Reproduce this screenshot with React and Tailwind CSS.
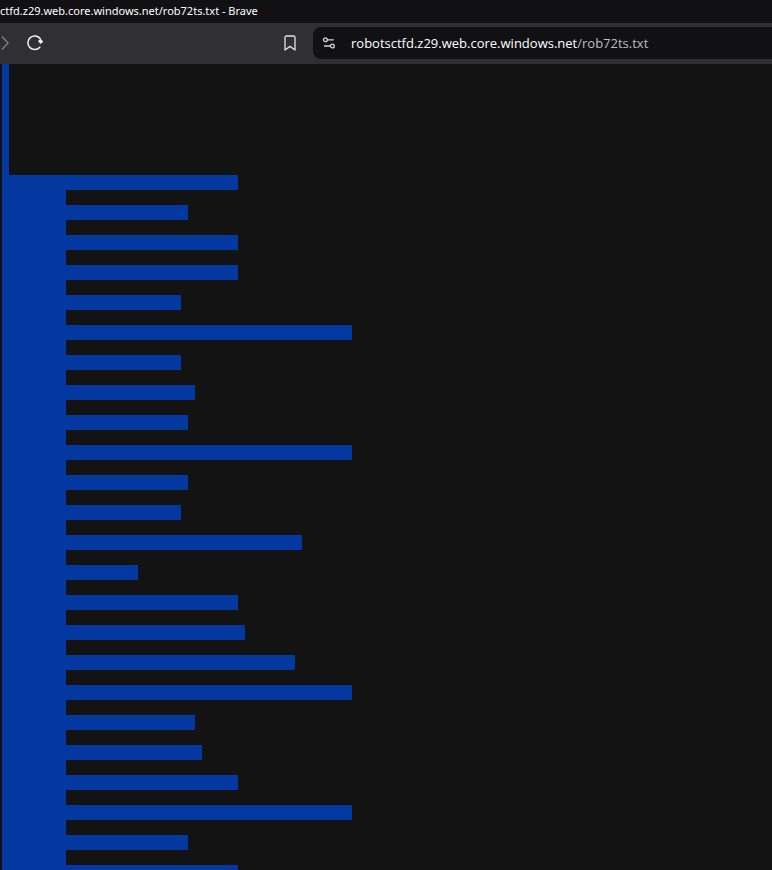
const records = [236, 186, 236, 236, 179, 350, 179, 193, 186, 350, 186, 179, 300, 136, 236, 243, 293, 350, 193, 200, 236, 350, 186, 236];

function ForwardIcon() {
  return (
    <svg width="10" height="16" viewBox="0 0 10 16" fill="none" stroke="#828286" strokeWidth="1.3" aria-hidden="true">
      <path d="M2 1.5 8 8l-6 6.5" />
    </svg>
  );
}

function ReloadIcon() {
  return (
    <svg width="18" height="18" viewBox="0 0 18 18" fill="none" aria-hidden="true">
      <path d="M14.4 5A6.8 6.8 0 1 0 13.8 13.2" stroke="#f0f0f2" strokeWidth="1.5" strokeLinecap="round" />
      <path d="M12.8 7 14.8 5.8l1.6 1.8-1.8 1.6Z" fill="#f0f0f2" stroke="#f0f0f2" strokeWidth="1.2" strokeLinejoin="round" />
    </svg>
  );
}

function BookmarkIcon() {
  return (
    <svg width="12" height="16" viewBox="0 0 12 16" fill="none" stroke="#e2e2e4" strokeWidth="1.3" strokeLinejoin="round" aria-hidden="true">
      <path d="M1 2.5Q1 1 2.5 1h7Q11 1 11 2.5V15L6 11.4 1 15Z" />
    </svg>
  );
}

function SiteSettingsIcon() {
  return (
    <svg width="14" height="12" viewBox="0 0 14 12" fill="none" stroke="#d8d8da" strokeWidth="1.3" aria-hidden="true">
      <circle cx="3.4" cy="2.8" r="1.9" />
      <path d="M5.3 2.8H11.8M2 9h6.4" />
      <circle cx="10.4" cy="9" r="1.9" />
    </svg>
  );
}

export default function App() {
  return (
    <div className="flex h-screen flex-col overflow-hidden bg-[#131313] font-['Open_Sans','Noto_Sans',sans-serif] text-white">
      <header className="shrink-0">
        <div className="flex h-[23px] items-center bg-[#111114]">
          <h1 className="font-['Noto_Sans',sans-serif] text-[11px] whitespace-nowrap">
            ctfd.z29.web.core.windows.net/rob72ts.txt - Brave
          </h1>
        </div>
        <div className="flex h-[41px] items-center bg-[#303034] pb-px">
          <button type="button" aria-label="Forward" className="flex w-[10px] justify-center">
            <ForwardIcon />
          </button>
          <button type="button" aria-label="Reload" className="ml-4 flex w-[18px] justify-center">
            <ReloadIcon />
          </button>
          <button type="button" aria-label="Bookmark this page" className="ml-60 flex w-3 justify-center">
            <BookmarkIcon />
          </button>
          <div className="ml-[17px] flex h-8 min-w-0 flex-1 items-center rounded-l-lg bg-[#111114] pl-[9px]">
            <button type="button" aria-label="Site settings">
              <SiteSettingsIcon />
            </button>
            <p className="ml-[15px] text-[13px] leading-5 whitespace-nowrap">
              robotsctfd.z29.web.core.windows.net<span className="text-[#bdbdc0]">/rob72ts.txt</span>
            </p>
          </div>
        </div>
      </header>
      <main className="min-h-0 flex-1 overflow-hidden pl-[2px]">
        <div className="h-[111px] w-[7px] bg-[#0338a0]" />
        {records.map((width, i) => (
          <div key={i}>
            <div className="h-[15px] bg-[#0338a0]" style={{ width }} />
            <div className="h-[15px] w-16 bg-[#0338a0]" />
          </div>
        ))}
      </main>
    </div>
  );
}
